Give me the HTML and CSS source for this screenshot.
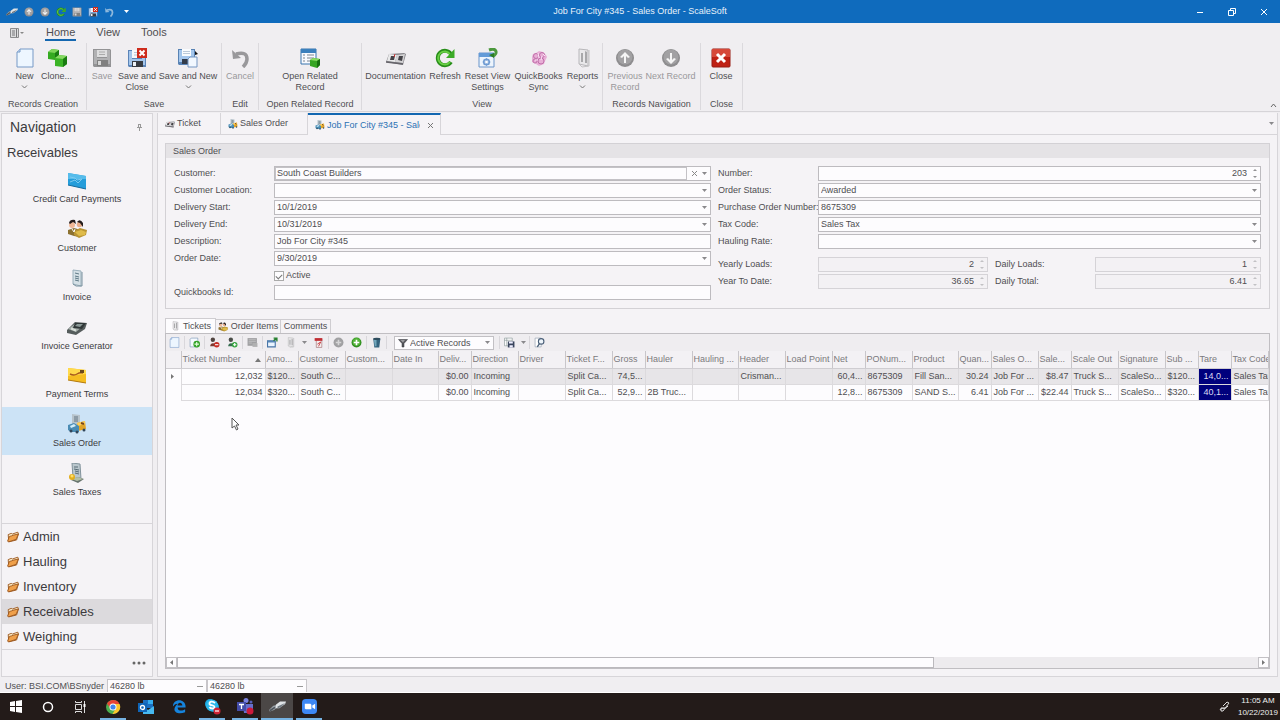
FILE: index.html
```html
<!DOCTYPE html>
<html lang="en">
<head>
<meta charset="utf-8">
<title>Job For City #345 - Sales Order - ScaleSoft</title>
<link rel="stylesheet" href="styles.css">
</head>
<body>
<svg class="defs" aria-hidden="true">
  <symbol id="scale" viewBox="0 0 20 20"><path d="M0 14l5-5 5-1 1 2-5 4-5 2z" fill="#9aa1a7"/><path d="M1 15l6-4" stroke="#4d545b" stroke-width="2"/><path d="M8 8l5-4 7 0-1 3-7 5-4 0z" fill="#dfe3e6"/><path d="M10 10l9-4-5 5-4 1z" fill="#6f7880"/></symbol>
  <symbol id="book" viewBox="0 0 20 20"><path d="M3 6l15-1 2 1-3 11-17-3z" fill="#87868b"/><path d="M3 6l8 1-2 7-8-1z" fill="#e9e9ea"/><path d="M11 7l8-1-2 9-8-1z" fill="#d4d3d5"/><path d="M5 8l4 0-1 4-4 0z M13 8l4 0-1 5-4-1z" fill="#434247"/><path d="M9 6l-1 3" stroke="#c33" stroke-width="1"/><path d="M0 14l17 2" stroke="#66646a" stroke-width="1.5"/></symbol>
  <symbol id="up" viewBox="0 0 20 20"><circle cx="10" cy="10" r="9" fill="#8e8d8f"/><circle cx="10" cy="9" r="7.5" fill="#a2a1a3"/><path d="M10 4l5 5-2 1-2-2v7H9V8l-2 2-2-1z" fill="#f5f5f5"/></symbol>
  <symbol id="down" viewBox="0 0 20 20"><circle cx="10" cy="10" r="9" fill="#8e8d8f"/><circle cx="10" cy="9" r="7.5" fill="#a2a1a3"/><path d="M10 16l5-5-2-1-2 2V5H9v7l-2-2-2 1z" fill="#f5f5f5"/></symbol>
  <symbol id="refresh" viewBox="0 0 20 20"><path d="M16 14a7.2 7.2 0 1 1 0-8" fill="none" stroke="#278d19" stroke-width="4"/><path d="M15 14a6.6 6.6 0 1 1 0-8" fill="none" stroke="#69cf45" stroke-width="2"/><path d="M19.500 1v9H11z" fill="#3cab27"/></symbol>
  <symbol id="save" viewBox="0 0 20 20"><path d="M1 2h17l1 1v16H2l-1-1z" fill="#5b84b8"/><path d="M2 3h3v8h10V3h3v14H2z" fill="#a4c6ec"/><path d="M5 2h10v8H5z" fill="#f6f9fc"/><path d="M7 4.500h6M7 7h6" stroke="#b6c6d6"/><path d="M5 13h11v6H5z" fill="#383c43"/><path d="M6 14h3v4H6z" fill="#edf2f8"/></symbol>
  <symbol id="savegray" viewBox="0 0 20 20"><path d="M1 1h17l1 1v17H2l-1-1z" fill="#939395"/><path d="M2 2h3v8h10V2h3v14H2z" fill="#b1b1b3"/><path d="M5 2h10v7H5z" fill="#dededf"/><path d="M7 4h6M7 6.500h6" stroke="#aaa"/><path d="M5 12h11v6H5z" fill="#808080"/><path d="M6 13h3v4H6z" fill="#d8d8d8"/></symbol>
  <symbol id="saveclose" viewBox="0 0 20 20"><use href="#save"/><path d="M10 0h10v10H10z" fill="#ce2b1c"/><path d="M12.500 2.500l5 5m0-5l-5 5" stroke="#fff" stroke-width="2"/></symbol>
  <symbol id="savenew" viewBox="0 0 20 20"><path d="M0 1h17v16H1l-1-1z" fill="#5882b4"/><path d="M1 2h15v12H1z" fill="#a4c6ec"/><path d="M4 1h9v7H4z" fill="#fafcfe"/><path d="M5 3.500h7M5 5.500h7" stroke="#bccada"/><path d="M4 11h6v5H4z" fill="#333b49"/><path d="M17 3l3 3-3 1z" fill="#111"/><path d="M12 9h7v10h-9v-8z" fill="#f2f8ff" stroke="#7596c2"/></symbol>
  <symbol id="page" viewBox="0 0 20 20"><path d="M5 1h13v18H2V4z" fill="#edf6ff" stroke="#7699c6"/><path d="M5 1v3H2" fill="#c9def5" stroke="#7699c6"/></symbol>
  <symbol id="clone" viewBox="0 0 20 20"><path d="M1 4l4-3 7 1v7l-4 3-7-1z" fill="#35aa21"/><path d="M1 4l4-3 7 1-4 3z" fill="#7fd45b"/><path d="M8 5l4-3v7l-4 3z" fill="#1b7d13"/><path d="M8 10l4-3 8 1v8l-4 3-8-1z" fill="#3bb426"/><path d="M8 10l4-3 8 1-4 3z" fill="#86d862"/><path d="M16 11l4-3v8l-4 3z" fill="#1a7c12"/></symbol>
  <symbol id="undo" viewBox="0 0 20 20"><path d="M6 6q11-3 11 5 0 4-4 8" fill="none" stroke="currentColor" stroke-width="3.500"/><path d="M2 2l1 9 8-1z" fill="currentColor"/></symbol>
  <symbol id="related" viewBox="0 0 20 20"><path d="M1 1h15v15H1z" fill="#f8faff" stroke="#3975ad"/><path d="M1 1h15v4H1z" fill="#3b80bd"/><path d="M3 7h2m2 0h7M3 10h2m2 0h7M3 13h2m2 0h4" stroke="#7a858f"/><path d="M10 12l3-2 7 1v6l-3 3-7-2z" fill="#36a522"/><path d="M10 12l3-2 7 1-3 2z" fill="#8bdc62"/><path d="M17 13l3-2v6l-3 3z" fill="#17700f"/></symbol>
  <symbol id="reset" viewBox="0 0 20 20"><path d="M1 5h15v14H1z" fill="#edf4fc" stroke="#6b95ca"/><path d="M1 5h15v4H1z" fill="#639bd8"/><circle cx="8.500" cy="14" r="2.800" fill="none" stroke="#6e9bd2" stroke-width="1.500"/><path d="M8.500 10v8m-4-4h8M6 11.500l5 5m0-5l-5 5" stroke="#6e9bd2" stroke-width=".8"/><circle cx="8.500" cy="14" r="1.300" fill="#fff"/><path d="M11 2c8-3 9 4 4 6" fill="none" stroke="#4c983d" stroke-width="3"/><path d="M16 5v5l-5-3z" fill="#2b7e23"/></symbol>
  <symbol id="qb" viewBox="0 0 20 20"><path d="M10 3l4 1 3 3 1 2-2 4-1 3-5 2-3-2-4-2 0-5 1-3 3-1z" fill="#e8aed6"/><g fill="none" stroke="#c070aa"><circle cx="7" cy="8" r="2.500"/><circle cx="13" cy="7" r="2.500"/><circle cx="12" cy="13" r="3"/><circle cx="6" cy="13" r="2"/></g><path d="M9 5l1 5m-4 2h3m4-4l-1 4m2-6l2 2" stroke="#fce4f6"/></symbol>
  <symbol id="report" viewBox="0 0 20 20"><path d="M6 1l9 1v16l-9-2z" fill="#e9e8ea" stroke="#b8b7ba"/><path d="M6 16l3 3 7-1V2" fill="none" stroke="#c3c2c4"/><path d="M8 5l2 0v9H8zm4-2l2 1v11h-2z" fill="#a8a8aa"/></symbol>
  <symbol id="close" viewBox="0 0 20 20"><rect x="1" y="1" width="18" height="18" rx="1" fill="#bf2115" stroke="#971d15"/><path d="M1 1h18v8H1z" fill="#d6493a"/><path d="M6 6l8 8m0-8l-8 8" stroke="#fff" stroke-width="3"/></symbol>
  <symbol id="card" viewBox="0 0 20 20"><path d="M1 3l18 3v13L1 15z" fill="#259dda"/><path d="M1 3l18 3v3L1 9z" fill="#56bceb"/><path d="M3 7l5 1 2 2 5-1-4 4-3-3-5 2" fill="none" stroke="#7cc9ee"/><path d="M1 15l18 4" stroke="#146a9d"/></symbol>
  <symbol id="terms" viewBox="0 0 20 20"><path d="M1 3l18 2v13L1 15z" fill="#f5bd22"/><path d="M1 3l18 2v4L1 11z" fill="#ffda4d"/><path d="M3 9q4 2 7 0t6-1" fill="none" stroke="#a85a1d" stroke-width="1.500"/><path d="M13 5h4v3h-4z" fill="#6a491d"/><path d="M1 15l18 3" stroke="#b3790e"/></symbol>
  <symbol id="customer" viewBox="0 0 20 20"><path d="M1 11l6-2 7 2-1 7-6-1-6-2z" fill="#8c7130"/><circle cx="5" cy="6" r="3" fill="#f0b897"/><path d="M2 4q1-4 6-3l1 4-3-2-3 2z" fill="#251d1c"/><circle cx="12.500" cy="5.500" r="2.800" fill="#e8ae8d"/><path d="M10 3q3-4 6 1v4l-3-4z" fill="#251d1c"/><path d="M7 12l6-3 7 2-1 5-7 3-5-3z" fill="#b99432"/><path d="M8 13l6-2 5 2-1 3-6 1z" fill="#dfbb4a"/><path d="M5 10l2 3 1-3" stroke="#fff" fill="none"/></symbol>
  <symbol id="invoice" viewBox="0 0 20 20"><path d="M6 2l8 1v15l-8-2z" fill="#d5e0e6" stroke="#9bb0bc"/><path d="M6 16l3 2 6 0V4" fill="none" stroke="#78909d"/><path d="M8 5l4 1M8 8l4 1M8 10l4 1M8 12l4 1" stroke="#5d7885"/></symbol>
  <symbol id="machine" viewBox="0 0 20 20"><path d="M0 13l8-8 12 1-2 6-9 6-9-2z" fill="#555c5c"/><path d="M1 12l8-6 8 2-8 7z" fill="#a5aeaa"/><path d="M8 6l11 0-4 6-9-1z" fill="#303738"/><path d="M10 7l6 0-3 3-5-1z" fill="#8a9896"/><path d="M4 12l5 2m-5-3l5 2" stroke="#e0e6e0"/></symbol>
  <symbol id="order" viewBox="0 0 20 20"><path d="M5 0l8 1v11H5z" fill="#b7c3cb"/><path d="M7 3h4M7 5h4M7 7h4" stroke="#637582"/><path d="M10 9l8-2 1 8-8 2z" fill="#e1a427"/><path d="M10 9l8-2v3l-7 2z" fill="#ffd05a"/><path d="M1 11l6-2 5 3v6l-8 0-3-2z" fill="#4a8cb4"/><path d="M3 12l4-2 2 2-5 2z" fill="#d1edfa"/><path d="M14 9l3 1" stroke="#74441b" stroke-width="2"/><circle cx="4" cy="17" r="1.500" fill="#31465a"/><circle cx="10" cy="18" r="1.500" fill="#31465a"/><circle cx="17" cy="16" r="1.500" fill="#31465a"/></symbol>
  <symbol id="taxes" viewBox="0 0 20 20"><path d="M5 0l8 1 1 15-8-1z" fill="#bac7cd" stroke="#82939c"/><path d="M7 4l4 0M7 6l5 1M8 8l4 1M8 10l4 1" stroke="#576b75"/><path d="M4 17l7-3 6 2-6 4z" fill="#67746d"/><path d="M5 16l6-2 5 2-6 2z" fill="#b4c0a8"/><circle cx="5" cy="14" r="3" fill="#e2ae1d"/><circle cx="5" cy="13" r="1.500" fill="#ffdd65"/></symbol>
  <symbol id="folder" viewBox="0 0 20 20"><path d="M2 6l5-2 2 1 9-3 1 3-3 10-13 3z" fill="#fff0cc" stroke="#9a551c" stroke-width="1.500"/><path d="M1 17l3-8 4-1 2-1 9-2-4 9-12 4z" fill="#f0a04a" stroke="#9a551c" stroke-width="1.500"/></symbol>
  <symbol id="plus" viewBox="0 0 20 20"><circle cx="10" cy="10" r="9" fill="#2f8d1f"/><circle cx="10" cy="9" r="7" fill="#53b438"/><path d="M8.500 5h3v3.500H15v3h-3.500V15h-3v-3.500H5v-3h3.500z" fill="#fff"/></symbol>
  <symbol id="plusgray" viewBox="0 0 20 20"><circle cx="10" cy="10" r="9" fill="#a0a0a2"/><path d="M8.500 5h3v3.500H15v3h-3.500V15h-3v-3.500H5v-3h3.500z" fill="#d5d5d6"/></symbol>
  <symbol id="pageadd" viewBox="0 0 20 20"><path d="M4 2h12v16H2V4z" fill="#f5faff" stroke="#6785a8"/><circle cx="14" cy="13" r="6" fill="#33a329"/><path d="M13 9h2v3h3v2h-3v3h-2v-3h-3v-2h3z" fill="#e9ffe1"/></symbol>
  <symbol id="unlink" viewBox="0 0 20 20"><circle cx="7" cy="5" r="4" fill="#504440"/><path d="M2 17q1-8 9-5l2 3-3 2z" fill="#7c3b31"/><circle cx="14" cy="14" r="5" fill="#c52b23"/><path d="M11 14h6" stroke="#fff" stroke-width="2"/></symbol>
  <symbol id="link" viewBox="0 0 20 20"><circle cx="7" cy="5" r="4" fill="#494c47"/><path d="M2 17q1-8 9-5l2 3-3 2z" fill="#376f50"/><circle cx="14" cy="14" r="5" fill="#32a33c"/><path d="M11 14h6m-3-3v6" stroke="#fff" stroke-width="2"/></symbol>
  <symbol id="windowopen" viewBox="0 0 20 20"><path d="M1 7h14v11H1z" fill="#e9f4ff" stroke="#4774a6" stroke-width="2"/><path d="M1 7h14v3H1z" fill="#5686b7"/><path d="M12 7l5-5m-5 0h6v6" fill="none" stroke="#298030" stroke-width="2.500"/></symbol>
  <symbol id="tray" viewBox="0 0 20 20"><path d="M1 2h17v14H1z" fill="#a0a0a2"/><path d="M3 5h13M3 8h13M3 11h6" stroke="#d3d3d4"/><path d="M10 11h9v7h-9z" fill="#b1b1b2"/></symbol>
  <symbol id="pdf" viewBox="0 0 20 20"><path d="M6 4h10v15H6z" fill="#f3eded" stroke="#96595c"/><path d="M3 2h14v5H3z" fill="#c12d33"/><path d="M8 13l6-4-4 8" fill="none" stroke="#c12d33" stroke-width="1.500"/></symbol>
  <symbol id="can" viewBox="0 0 20 20"><path d="M4 3h13l-2 16H6z" fill="#35647e"/><path d="M5 4h5v13H7z" fill="#73a7bc"/><ellipse cx="10.500" cy="3.500" rx="6.500" ry="2" fill="#2e4c5d"/></symbol>
  <symbol id="funnel" viewBox="0 0 20 20"><path d="M1 3h18l-7 8v7H8v-7z" fill="#57585d" stroke="#33343a"/><path d="M5 4h9l-4 5z" fill="#9c9da1"/></symbol>
  <symbol id="gridsave" viewBox="0 0 20 20"><path d="M1 2h14v14H1z" fill="#fff" stroke="#788"/><path d="M1 6h14M5 2v14" stroke="#788"/><path d="M7 8h12v11H7z" fill="#38445c"/><path d="M9 8h7v4H9zm1 7h6v4h-6z" fill="#eef"/></symbol>
  <symbol id="find" viewBox="0 0 20 20"><path d="M2 2h11v16H2z" fill="#fff" stroke="#8090a2"/><circle cx="13" cy="8" r="5" fill="#edf4fa" stroke="#4a5f78" stroke-width="2"/><path d="M10 12l-4 6" stroke="#4a5f78" stroke-width="2.500"/></symbol>
  <symbol id="chev" viewBox="0 0 7 4"><path d="M1 .5l2.500 2.500L6 .5" fill="none" stroke="#777"/></symbol>
  <symbol id="caret" viewBox="0 0 5 3"><path d="M0 0h5L2.500 3z" fill="currentColor"/></symbol>
  <symbol id="spin" viewBox="0 0 4 9"><path d="M0 2h4L2 0zM0 7h4L2 9z" fill="currentColor"/></symbol>
</svg>

<header class="titlebar">
  <div class="quick">
    <svg class="i12"><use href="#scale"/></svg>
    <button aria-label="Previous"><svg class="i10"><use href="#up"/></svg></button>
    <button aria-label="Next"><svg class="i10"><use href="#down"/></svg></button>
    <button aria-label="Refresh"><svg class="i10"><use href="#refresh"/></svg></button>
    <button aria-label="Save"><svg class="i10"><use href="#savegray"/></svg></button>
    <button aria-label="Save and close"><svg class="i10"><use href="#saveclose"/></svg></button>
    <button aria-label="Undo" class="faint"><svg class="i10"><use href="#undo"/></svg></button>
    <button aria-label="Customize"><svg class="caret"><use href="#caret"/></svg></button>
  </div>
  <h1>Job For City #345 - Sales Order - ScaleSoft</h1>
  <div class="winbtns">
    <button aria-label="Minimize"><svg width="8" height="8"><path d="M1 4.500h6" stroke="#fff"/></svg></button>
    <button aria-label="Restore"><svg width="8" height="8"><path d="M.5 2.500h5v5h-5zM2.500 2.500v-2h5v5h-2" fill="none" stroke="#fff"/></svg></button>
    <button aria-label="Close window"><svg width="8" height="8"><path d="M1 1l6 6m0-6l-6 6" stroke="#fff"/></svg></button>
  </div>
</header>

<nav class="menu">
  <button class="appmenu" aria-label="Application menu"><svg width="15" height="10"><path d="M.5 .5h8v9h-8z" fill="#dcdcdd" stroke="#8c8c8e"/><path d="M2 3h3M2 5h3M2 7h3M6.500 1v8" stroke="#77777a"/><path d="M10 4h4l-2 2z" fill="#888"/></svg></button>
  <button class="on">Home</button><button>View</button><button>Tools</button>
</nav>

<section class="ribbon">
  <div class="group g-create"><div class="btns">
    <button class="w32"><svg class="i20"><use href="#page"/></svg><span>New</span><svg class="chev"><use href="#chev"/></svg></button>
    <button class="w32"><svg class="i20"><use href="#clone"/></svg><span>Clone...</span></button>
  </div><h2>Records Creation</h2></div>
  <div class="group g-save"><div class="btns">
    <button class="w24 off"><svg class="i20"><use href="#savegray"/></svg><span>Save</span></button>
    <button class="w45"><svg class="i20"><use href="#saveclose"/></svg><span>Save and<br>Close</span></button>
    <button class="w56"><svg class="i20"><use href="#savenew"/></svg><span>Save and New</span><svg class="chev"><use href="#chev"/></svg></button>
  </div><h2>Save</h2></div>
  <div class="group g-edit"><div class="btns">
    <button class="w32 off"><svg class="i20"><use href="#undo"/></svg><span>Cancel</span></button>
  </div><h2>Edit</h2></div>
  <div class="group g-open"><div class="btns">
    <button class="w56"><svg class="i20"><use href="#related"/></svg><span>Open Related<br>Record</span></button>
  </div><h2>Open Related Record</h2></div>
  <div class="group g-view"><div class="btns">
    <button class="w60"><svg class="i20"><use href="#book"/></svg><span>Documentation</span></button>
    <button class="w38"><svg class="i20"><use href="#refresh"/></svg><span>Refresh</span></button>
    <button class="w45"><svg class="i20"><use href="#reset"/></svg><span>Reset View<br>Settings</span></button>
    <button class="w56"><svg class="i20"><use href="#qb"/></svg><span>QuickBooks<br>Sync</span></button>
    <button class="w32"><svg class="i20"><use href="#report"/></svg><span>Reports</span><svg class="chev"><use href="#chev"/></svg></button>
  </div><h2>View</h2></div>
  <div class="group g-nav"><div class="btns">
    <button class="w38 off"><svg class="i20"><use href="#up"/></svg><span>Previous<br>Record</span></button>
    <button class="w52 off"><svg class="i20"><use href="#down"/></svg><span>Next Record</span></button>
  </div><h2>Records Navigation</h2></div>
  <div class="group g-close"><div class="btns">
    <button class="w38"><svg class="i20"><use href="#close"/></svg><span>Close</span></button>
  </div><h2>Close</h2></div>
  <button class="collapse" aria-label="Collapse ribbon"><svg width="7" height="5"><path d="M1 4l2.500-3L6 4" fill="none" stroke="#666"/></svg></button>
</section>

<div class="work">
  <aside class="side">
    <div class="side-title"><h2>Navigation</h2><button aria-label="Pin"><svg width="5" height="7"><path d="M1.500 0v3M3.500 0v3M0 3.500h5M2.500 4v3M1 .5h3" stroke="#999"/></svg></button></div>
    <h3>Receivables</h3>
    <div class="items">
      <button><svg class="i20"><use href="#card"/></svg>Credit Card Payments</button>
      <button><svg class="i20"><use href="#customer"/></svg>Customer</button>
      <button><svg class="i20"><use href="#invoice"/></svg>Invoice</button>
      <button><svg class="i20"><use href="#machine"/></svg>Invoice Generator</button>
      <button><svg class="i20"><use href="#terms"/></svg>Payment Terms</button>
      <button class="on"><svg class="i20"><use href="#order"/></svg>Sales Order</button>
      <button><svg class="i20"><use href="#taxes"/></svg>Sales Taxes</button>
    </div>
    <div class="folders">
      <button><svg class="i12"><use href="#folder"/></svg>Admin</button>
      <button><svg class="i12"><use href="#folder"/></svg>Hauling</button>
      <button><svg class="i12"><use href="#folder"/></svg>Inventory</button>
      <button class="on"><svg class="i12"><use href="#folder"/></svg>Receivables</button>
      <button><svg class="i12"><use href="#folder"/></svg>Weighing</button>
    </div>
    <button class="more" aria-label="More"><svg width="14" height="4"><circle cx="2" cy="2" r="1.500"/><circle cx="7" cy="2" r="1.500"/><circle cx="12" cy="2" r="1.500"/></svg></button>
  </aside>

  <main class="doc">
    <div class="tabs">
      <button class="t-ticket"><svg class="i10"><use href="#book"/></svg>Ticket</button>
      <button class="t-order"><svg class="i10"><use href="#order"/></svg>Sales Order</button>
      <button class="t-job on"><svg class="i10"><use href="#order"/></svg><span>Job For City #345 - Sales Order</span><svg width="5" height="5"><path d="M0 0l5 5m0-5l-5 5" stroke="#777"/></svg></button>
      <div class="tabs-rest"><svg class="caret"><use href="#caret"/></svg></div>
    </div>

    <div class="content">
      <form class="panel">
        <h2>Sales Order</h2>
        <div class="columns">
          <div class="left">
            <div class="row"><label for="customer-in">Customer:</label><div class="field focus"><input id="customer-in" value="South Coast Builders"><button type="button" aria-label="Clear"><svg width="5" height="5"><path d="M0 0l5 5m0-5l-5 5" stroke="#888"/></svg></button><button type="button" aria-label="Open"><svg class="caret"><use href="#caret"/></svg></button></div></div>
            <div class="row"><label for="loc">Customer Location:</label><div class="field"><select id="loc"><option></option></select><svg class="caret"><use href="#caret"/></svg></div></div>
            <div class="row"><label for="ds">Delivery Start:</label><div class="field"><input id="ds" value="10/1/2019"><button type="button" aria-label="Open calendar"><svg class="caret"><use href="#caret"/></svg></button></div></div>
            <div class="row"><label for="de">Delivery End:</label><div class="field"><input id="de" value="10/31/2019"><button type="button" aria-label="Open calendar"><svg class="caret"><use href="#caret"/></svg></button></div></div>
            <div class="row"><label for="desc">Description:</label><div class="field"><input id="desc" value="Job For City #345"></div></div>
            <div class="row"><label for="od">Order Date:</label><div class="field"><input id="od" value="9/30/2019"><button type="button" aria-label="Open calendar"><svg class="caret"><use href="#caret"/></svg></button></div></div>
            <div class="row"><span></span><label class="check"><input type="checkbox" checked>Active</label></div>
            <div class="row"><label for="qbid">Quickbooks Id:</label><div class="field"><input id="qbid"></div></div>
          </div>
          <div class="right">
            <div class="row"><label for="num">Number:</label><div class="field num"><input id="num" value="203"><svg class="spin"><use href="#spin"/></svg></div></div>
            <div class="row"><label for="st">Order Status:</label><div class="field"><select id="st"><option>Awarded</option></select><svg class="caret"><use href="#caret"/></svg></div></div>
            <div class="row"><label for="po">Purchase Order Number:</label><div class="field"><input id="po" value="8675309"></div></div>
            <div class="row"><label for="tc">Tax Code:</label><div class="field"><select id="tc"><option>Sales Tax</option></select><svg class="caret"><use href="#caret"/></svg></div></div>
            <div class="row"><label for="hr">Hauling Rate:</label><div class="field"><select id="hr"><option></option></select><svg class="caret"><use href="#caret"/></svg></div></div>
            <div class="stats">
              <div class="row"><label for="yl">Yearly Loads:</label><div class="field num ro"><input id="yl" value="2" readonly><svg class="spin"><use href="#spin"/></svg></div></div>
              <div class="row"><label for="dl">Daily Loads:</label><div class="field num ro"><input id="dl" value="1" readonly><svg class="spin"><use href="#spin"/></svg></div></div>
              <div class="row"><label for="yd">Year To Date:</label><div class="field num ro"><input id="yd" value="36.65" readonly><svg class="spin"><use href="#spin"/></svg></div></div>
              <div class="row"><label for="dt">Daily Total:</label><div class="field num ro"><input id="dt" value="6.41" readonly><svg class="spin"><use href="#spin"/></svg></div></div>
            </div>
          </div>
        </div>
      </form>

      <div class="subtabs">
        <button class="on s-tickets"><svg class="i10"><use href="#report"/></svg>Tickets</button>
        <button class="s-items"><svg class="i10"><use href="#customer"/></svg>Order Items</button>
        <button class="s-comments">Comments</button>
      </div>

      <section class="gridbox">
        <div class="toolbar">
          <button aria-label="New"><svg><use href="#page"/></svg></button><i></i>
          <button aria-label="Clone"><svg><use href="#pageadd"/></svg></button><i></i>
          <button aria-label="Unlink"><svg><use href="#unlink"/></svg></button>
          <button aria-label="Link"><svg><use href="#link"/></svg></button><i></i>
          <button aria-label="Tray"><svg><use href="#tray"/></svg></button><i></i>
          <button aria-label="Open"><svg><use href="#windowopen"/></svg></button>
          <button aria-label="Report"><svg><use href="#report"/></svg></button>
          <button class="thin" aria-label="Report menu"><svg class="caret"><use href="#caret"/></svg></button>
          <button aria-label="Export"><svg><use href="#pdf"/></svg></button><i></i>
          <button aria-label="Add disabled"><svg><use href="#plusgray"/></svg></button>
          <button aria-label="Add"><svg><use href="#plus"/></svg></button><i></i>
          <button aria-label="Delete"><svg><use href="#can"/></svg></button><i></i>
          <div class="filter"><svg class="i10"><use href="#funnel"/></svg><select aria-label="Filter"><option>Active Records</option></select><svg class="caret"><use href="#caret"/></svg></div><i></i>
          <button aria-label="Save layout"><svg><use href="#gridsave"/></svg></button>
          <button class="thin" aria-label="Layout menu"><svg class="caret"><use href="#caret"/></svg></button><i></i>
          <button aria-label="Find"><svg><use href="#find"/></svg></button>
        </div>
        <div class="tablewrap">
          <table>
            <colgroup><col class="c15"><col class="c84"><col class="c33"><col class="c47"><col class="c47"><col class="c46"><col class="c33"><col class="c47"><col class="c47"><col class="c47"><col class="c33"><col class="c47"><col class="c46"><col class="c47"><col class="c47"><col class="c33"><col class="c47"><col class="c46"><col class="c33"><col class="c47"><col class="c33"><col class="c47"><col class="c47"><col class="c33"><col class="c33"><col></colgroup>
            <thead><tr><th></th><th class="sort">Ticket Number<svg width="6" height="4"><path d="M0 4h6L3 0z" fill="#777"/></svg></th><th>Amo...</th><th>Customer</th><th>Custom...</th><th>Date In</th><th>Deliv...</th><th>Direction</th><th>Driver</th><th>Ticket F...</th><th>Gross</th><th>Hauler</th><th>Hauling ...</th><th>Header</th><th>Load Point</th><th>Net</th><th>PONum...</th><th>Product</th><th>Quan...</th><th>Sales O...</th><th>Sale...</th><th>Scale Out</th><th>Signature</th><th>Sub ...</th><th>Tare</th><th>Tax Code</th></tr></thead>
            <tbody>
              <tr class="sel"><td class="mark"><svg width="3" height="5"><path d="M0 0l3 2.500L0 5z" fill="#777"/></svg></td><td class="r key">12,032</td><td>$120...</td><td>South C...</td><td></td><td></td><td class="r">$0.00</td><td>Incoming</td><td></td><td>Split Ca...</td><td class="n">74,5...</td><td></td><td></td><td>Crisman...</td><td></td><td class="n">60,4...</td><td>8675309</td><td>Fill San...</td><td class="r">30.24</td><td>Job For ...</td><td class="r">$8.47</td><td>Truck S...</td><td>ScaleSo...</td><td>$120...</td><td class="n tare">14,0...</td><td>Sales Tax</td></tr>
              <tr><td></td><td class="r">12,034</td><td>$320...</td><td>South C...</td><td></td><td></td><td class="r">$0.00</td><td>Incoming</td><td></td><td>Split Ca...</td><td class="n">52,9...</td><td>2B Truc...</td><td></td><td></td><td></td><td class="n">12,8...</td><td>8675309</td><td>SAND S...</td><td class="r">6.41</td><td>Job For ...</td><td class="r">$22.44</td><td>Truck S...</td><td>ScaleSo...</td><td>$320...</td><td class="n tare">40,1...</td><td>Sales Tax</td></tr>
            </tbody>
          </table>
          <svg class="pointer" width="9" height="14"><path d="M1 1v10l2.500-2 2 4 1.500-1-2-4H8z" fill="#fff" stroke="#555"/></svg>
        </div>
        <div class="scroll"><button aria-label="Scroll left"><svg width="3" height="5"><path d="M3 0L0 2.500 3 5z" fill="#777"/></svg></button><div class="track"><div class="thumb"></div></div><button aria-label="Scroll right"><svg width="3" height="5"><path d="M0 0l3 2.500L0 5z" fill="#777"/></svg></button></div>
      </section>
    </div>
  </main>
</div>

<footer class="status"><span>User: BSI.COM\BSnyder</span><div>46280 lb<b></b></div><div>46280 lb<b></b></div></footer>

<div class="taskbar">
  <button aria-label="Start"><svg width="12" height="13"><path d="M0 2l5-1v5H0zM6 1l6-1v6H6zM0 7h5v5l-5-1zM6 7h6v6l-6-1z" fill="#fff"/></svg></button>
  <button aria-label="Search"><svg width="12" height="12"><circle cx="6" cy="6" r="4.500" fill="none" stroke="#fff" stroke-width="1.500"/></svg></button>
  <button aria-label="Task view"><svg width="12" height="12"><path d="M1.500 3.500h6v5h-6zM1.500 0v1.500h6V0M1.500 12v-1.500h6V12M10.500 0v12" fill="none" stroke="#ddd"/><path d="M9.500 3h2v3h-2z" fill="#fff"/></svg></button>
  <button class="run" aria-label="Chrome"><svg width="16" height="16" viewBox="0 0 16 16"><circle cx="8" cy="8" r="7" fill="#4caf50"/><path d="M2 4.500A7 7 0 0 1 14.500 5H8L5 9z" fill="#e94435"/><path d="M14.500 5A7 7 0 0 1 7.500 15l3-5L8 5z" fill="#fbc52b"/><circle cx="8" cy="8" r="3.500" fill="#fff"/><circle cx="8" cy="8" r="2.600" fill="#4286ee"/></svg></button>
  <button aria-label="Outlook"><svg width="16" height="16" viewBox="0 0 16 16"><path d="M5 1h10v8H5z" fill="#1a6fc1"/><path d="M10 1h5v4h-5z" fill="#35aef0"/><path d="M5 7l5 4 6-4v8H5z" fill="#47b9f0"/><path d="M0 4h9v9H0z" fill="#0f65b8"/><circle cx="4.500" cy="8.500" r="2" fill="none" stroke="#fff" stroke-width="1.300"/></svg></button>
  <button aria-label="Edge"><svg width="15" height="15" viewBox="0 0 16 16"><path d="M1 8C1-1 15-1 14.500 9H6c0 4 5 4 8 2v3C7 17 1 14 3 9c1-2 2-3 3-4-3 0-4 2-5 3zm5-1h5c0-4-5-4-5 0z" fill="#1684dd"/></svg></button>
  <button class="run" aria-label="Skype"><svg width="17" height="17" viewBox="0 0 17 17"><circle cx="6" cy="6" r="5" fill="#17a8e2"/><circle cx="10" cy="9" r="5" fill="#17a8e2"/><circle cx="8" cy="7.500" r="6" fill="#2cb8eb"/><path d="M11 5C9 3 5 3 5.500 6c1 2 5 1 5 3 0 2-4 2-5 0" fill="none" stroke="#fff" stroke-width="1.800"/><circle cx="13" cy="13" r="3.500" fill="#cf2334"/><path d="M11 13h4" stroke="#fff" stroke-width="1.200"/></svg></button>
  <button class="run" aria-label="Teams"><svg width="17" height="17" viewBox="0 0 17 17"><circle cx="9" cy="2.500" r="2.500" fill="#7b83e0"/><circle cx="14" cy="4" r="1.500" fill="#5660bb"/><path d="M6 6h10v6l-3 3H7z" fill="#666fcc"/><path d="M0 4h9v9H0z" fill="#434ca8"/><path d="M2 6.500h5M4.500 6.500V11" stroke="#fff" stroke-width="1.300"/><circle cx="13" cy="13" r="3.500" fill="#cd193b"/></svg></button>
  <button class="run cur" aria-label="ScaleSoft"><svg width="17" height="17"><use href="#scale"/></svg></button>
  <button class="run" aria-label="Zoom"><svg width="15" height="15" viewBox="0 0 16 16"><rect width="16" height="16" rx="4" fill="#3d88f5"/><path d="M3 5h6l1 1v5H4l-1-1zM11 7l3-2v6l-3-2z" fill="#fff"/></svg></button>
  <div class="clock"><svg width="11" height="11" viewBox="0 0 11 11"><path d="M4 5l4-4 2 1-3 4-3 4H2V7h4m-5 2c2-4 4 1 8-4" fill="none" stroke="#ddd"/></svg><time>11:05 AM<br>10/22/2019</time></div>
</div>
</body>
</html>
```
FILE: styles.css
```css
* { box-sizing: border-box; }
body {
  margin: 0;
  min-height: 100vh;
  display: flex;
  flex-direction: column;
  background: #f0eef1;
  color: #4f4e51;
  font: 9px/11px "Liberation Sans", Arial, sans-serif;
}
h1, h2, h3 { margin: 0; font-size: inherit; font-weight: normal; }
button, input, select { font: inherit; color: inherit; border: 0; padding: 0; margin: 0; background: none; border-radius: 0; }
button { display: flex; align-items: center; justify-content: center; }
svg { display: block; flex: none; }
.defs { width: 0; height: 0; position: absolute; }
.i10 { width: 10px; height: 10px; }
.i12 { width: 12px; height: 12px; }
.i20 { width: 20px; height: 20px; }
.caret { width: 5px; height: 3px; color: #8a898c; }
.chev { width: 7px; height: 4px; }

.titlebar { height: 23px; background: #0f6bbd; color: #e8f1fa; display: grid; grid-template-columns: 1fr auto 1fr; align-items: center; }
.quick { display: flex; align-items: center; gap: 6px; padding-left: 6px; }
.quick button { min-width: 10px; height: 12px; }
.quick button:last-child { margin-left: 1px; }
.quick .caret { color: #fff; }
.faint { color: #8eb8dc; }
.winbtns { display: flex; justify-content: flex-end; }
.winbtns button { width: 32px; height: 23px; }

.menu { height: 20px; display: flex; align-items: flex-start; font-size: 11px; line-height: 16px; padding-left: 9px; }
.menu button { height: 18px; margin-right: 19px; padding: 2px 1px 0; border-bottom: 2px solid transparent; }
.menu .appmenu { margin-right: 19px; height: 20px; }
.menu .on { border-color: #1467b0; }

.ribbon { height: 69px; display: flex; border-bottom: 1px solid #d6d4d8; }
.group { display: flex; flex-direction: column; justify-content: space-between; border-right: 1px solid #dbd9dd; margin-bottom: 1px; padding: 5px 0 0; }
.group h2 { text-align: center; white-space: nowrap; }
.btns { display: flex; justify-content: center; align-items: flex-start; }
.btns button { flex-direction: column; line-height: 11px; white-space: nowrap; }
.btns span { margin-top: 3px; }
.btns .chev { margin-top: 3px; }
.off { color: #99989b; }
.w24 { width: 24px; } .w32 { width: 32px; } .w38 { width: 39px; } .w45 { width: 46px; }
.w52 { width: 52px; } .w56 { width: 56px; } .w60 { width: 60px; }
.g-create { width: 87px; } .g-create .btns { padding-right: 5px; }
.g-save { width: 135px; } .g-save .btns { padding-right: 2px; }
.g-edit { width: 37px; } .g-open { width: 103px; }
.g-view { width: 241px; } .g-nav { width: 98px; } .g-close { width: 42px; }
.g-nav .btns, .g-close .btns { padding-right: 1px; }
.collapse { margin-left: auto; align-self: flex-end; padding: 3px; }

.work { flex: 1; display: flex; gap: 4px; padding: 1px 2px 2px 1px; }
.side { width: 152px; border: 1px solid #d7d5d9; background: #f5f3f6; display: flex; flex-direction: column; color: #3c3b3e; }
.side-title { display: flex; justify-content: space-between; align-items: center; padding: 0 10px 0 8px; font-size: 14px; line-height: 27px; }
.side h3 { font-size: 13px; line-height: 21px; padding: 1px 0 0 5px; }
.items { flex: 1; display: flex; flex-direction: column; padding-bottom: 19px; }
.items button { flex: 1; flex-direction: column; gap: 4px; padding-top: 1px; }
.items .on { background: #cce3f6; }
.folders { border: solid #d7d5d9; border-width: 1px 0; display: flex; flex-direction: column; }
.folders button { height: 25px; justify-content: flex-start; gap: 4px; padding-left: 5px; font-size: 13px; line-height: 25px; }
.folders .on { background: #dcdadd; }
.more { height: 26px; align-self: flex-end; padding-right: 6px; fill: #666; }

.doc { flex: 1; min-width: 0; border: 1px solid #d7d5d9; border-top: 0; background: #f5f3f6; display: flex; flex-direction: column; }
.tabs { display: flex; height: 22px; background: #f5f3f6; }
.tabs button { justify-content: flex-start; gap: 2px; padding: 0 7px; border: solid #d7d5d9; border-width: 0 1px 1px 0; white-space: nowrap; }
.t-ticket { width: 63px; }
.t-order { width: 87px; }
.tabs .t-job { width: 133px; border-top: 2px solid #1267b1; border-bottom: 0; color: #2b71b4; }
.t-job span { flex: 1; overflow: hidden; margin-right: 6px; }
.tabs-rest { flex: 1; border-bottom: 1px solid #d7d5d9; display: flex; align-items: center; justify-content: flex-end; padding-right: 3px; }

.content { flex: 1; display: flex; flex-direction: column; padding: 8px 7px 7px; }
.panel { border: 1px solid #d3d1d5; }
.panel h2 { background: #e5e3e6; line-height: 14px; padding-left: 7px; }
.columns { display: grid; grid-template-columns: 537fr 543fr; gap: 7px; padding: 7px 8px; }
.row { display: grid; grid-template-columns: 100px 1fr; align-items: center; height: 17px; white-space: nowrap; }
.field { height: 15px; display: flex; align-items: center; border: 1px solid #bdbbbf; background: #fdfcfe; padding-right: 3px; }
.field input, .field select { flex: 1; min-width: 0; width: 100%; height: 13px; padding: 0 2px; appearance: none; outline: 0; line-height: 13px; }
.field button { height: 13px; padding-left: 5px; }
.field.focus input { border: 1px solid #c4c2c6; padding: 0 1px; }
.num input { text-align: right; padding-right: 6px; }
.spin { width: 4px; height: 9px; color: #929194; }
.ro { background: #f3f1f4; border-color: #d5d3d7; }
.ro .spin { color: #c2c1c4; }
.check { display: flex; align-items: center; gap: 2px; }
.check input { appearance: none; width: 10px; height: 10px; border: 1px solid #aaa; background: #fdfcfe; display: grid; place-items: center; }
.check input:checked::after { content: ""; width: 5px; height: 3px; border: solid #777; border-width: 0 0 1px 1px; rotate: -45deg; }
.stats { display: grid; grid-template-columns: 270fr 266fr; column-gap: 7px; padding-top: 6px; }

.subtabs { display: flex; align-items: flex-end; margin-top: 9px; height: 15px; }
.subtabs button { height: 14px; border: 1px solid #cfcdd1; border-width: 1px 1px 0 0; gap: 3px; white-space: nowrap; }
.subtabs .on { height: 15px; background: #fdfcfe; border-left-width: 1px; }
.s-tickets { width: 51px; } .s-items { width: 65px; } .s-comments { width: 50px; }

.gridbox { flex: 1; border: 1px solid #c0bec2; display: flex; flex-direction: column; background: #fdfcfe; }
.toolbar { height: 17px; display: flex; align-items: center; background: #efedf0; }
.toolbar button { width: 18px; height: 15px; padding-right: 1px; }
.toolbar button svg { width: 11px; height: 11px; }
.toolbar .thin { width: 10px; }
.toolbar button .caret { width: 5px; height: 3px; }
.toolbar i { width: 1px; height: 13px; background: #d9d7db; margin-right: 1px; }
.filter { display: flex; align-items: center; width: 100px; height: 14px; border: 1px solid #c2c0c4; background: #fdfcfe; padding: 0 3px; gap: 2px; margin: 0 5px 0 6px; }
.filter select { appearance: none; flex: 1; height: 12px; line-height: 12px; min-width: 0; }

.tablewrap { flex: 1; position: relative; }
table { width: 100%; table-layout: fixed; border-collapse: collapse; }
th, td { padding: 0 1px; overflow: hidden; white-space: nowrap; font-weight: normal; text-align: left; border-right: 1px solid #dcdadd; }
th { height: 17px; background: #f3f1f4; color: #7b7a7d; border-bottom: 1px solid #cfcdd1; border-right-color: #c8c6ca; }
td { height: 16px; border-bottom: 1px solid #dcdadd; padding-left: 2px; }
.sort svg { float: right; margin: 4px 3px 0 0; }
.r { text-align: right; padding: 0 2px 0 0; }
.n { padding-left: 5px; }
.sel td { background: #e7e5e8; }
.sel .key, .sel .mark { background: #fdfcfe; }
td.mark { padding-left: 5px; }
tbody tr td:first-child { border-bottom: 0; }
tr td.tare { background: #00007d; color: #dcdcf4; }
.c15 { width: 15px; } .c84 { width: 84px; } .c33 { width: 33px; } .c46 { width: 46px; } .c47 { width: 47px; }
.pointer { position: absolute; left: 65px; top: 66px; }

.scroll { display: flex; height: 11px; background: #edebee; }
.scroll button { width: 11px; border: 1px solid #c3c1c5; background: #fdfcfe; }
.track { flex: 1; display: flex; }
.thumb { width: 70%; border: 1px solid #bbb9bd; background: #fdfcfe; }

.status { height: 14px; display: flex; line-height: 14px; border-bottom: 1px solid #fff; }
.status span { width: 107px; padding-left: 5px; white-space: nowrap; }
.status div { width: 100px; border: 1px solid #c8c6ca; border-width: 1px 1px 0; background: #fdfcfe; padding: 0 3px 0 2px; display: flex; align-items: center; justify-content: space-between; }
.status b { width: 6px; height: 1px; background: #999; }

.taskbar { height: 27px; display: flex; background: #231b19; color: #eee; }
.taskbar button { width: 32px; margin-right: 1px; border: solid transparent; border-width: 2px 0; }
.taskbar button:first-child, .taskbar button:nth-child(2) { margin-right: 0; }
.taskbar .run { width: 26px; margin: 0 4px 0 3px; border-bottom-color: #76b3e2; }
.taskbar .cur { width: 32px; margin: 0 0 0 -1px; background: #4b4746; border-top-color: #4b4746; }
.clock { margin-left: auto; display: flex; align-items: center; gap: 8px; padding-right: 2px; font-size: 8px; line-height: 12px; text-align: center; }
```
